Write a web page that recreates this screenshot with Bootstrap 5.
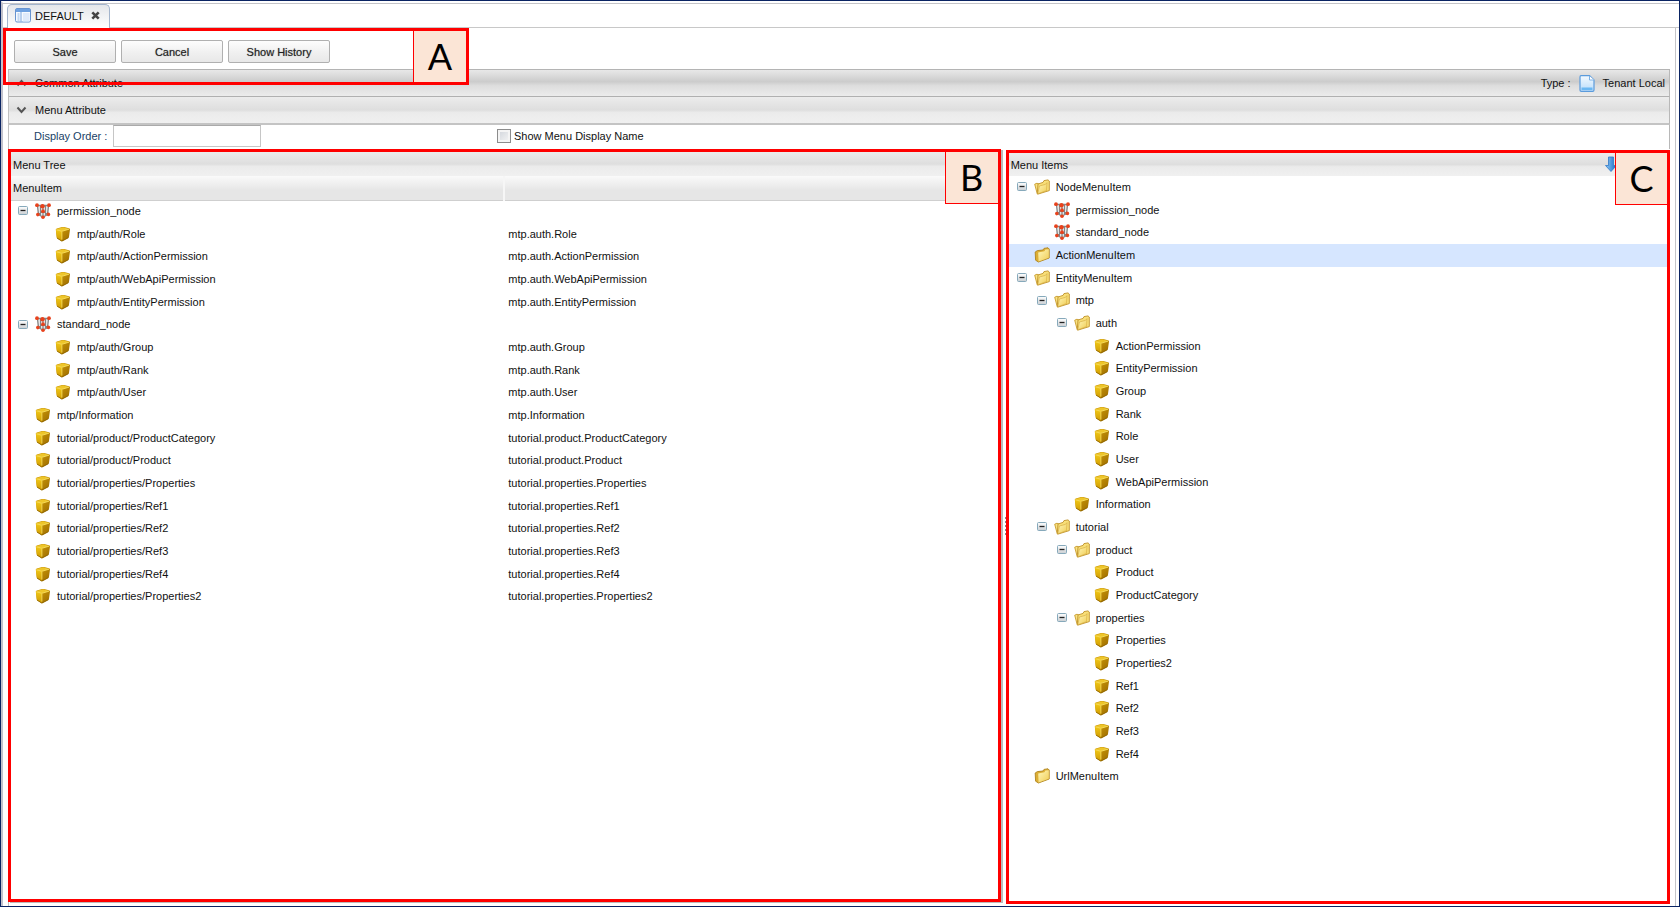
<!DOCTYPE html>
<html lang="en">
<head>
<meta charset="utf-8">
<meta name="viewport" content="width=device-width, initial-scale=1">
<title>DEFAULT - Menu Editor</title>
<link href="https://cdn.jsdelivr.net/npm/bootstrap@5.3.0/dist/css/bootstrap.min.css" rel="stylesheet">
<style>
  body { font-family: "Liberation Sans", Arial, sans-serif; font-size: 11px; line-height: 16px; color: #111; background: #fff; border: 1px solid #0a2463; }
  .frame { border-left: 2px solid #c2c2cc; border-top: 2px solid #fff; min-height: 0; }
  .tabstrip { height: 25px; border-top: 1px solid #c4c4c8; border-bottom: 1px solid #c8c8c8; padding-left: 4px; }
  .doc-tab { height: 24px; width: 103px; border: 1px solid #a3b4cc; border-bottom: 0; border-radius: 5px 5px 0 0; background: linear-gradient(#e4e6ea, #fff); padding: 0 9px 2px 7px; }
  .tab-close { width: 10px; height: 12px; line-height: 0; }
  .page { border-right: 1px solid #c4c4c8; margin-right: 3px; min-height: 0; }
  .toolbar { height: 41px; padding: 12px 0 0 11px; gap: 5px; }
  .tool-btn { width: 102px; height: 23px; padding: 0; font-size: 11px; line-height: 20px; color: #222; border: 1px solid #b0b0b0; border-radius: 2px; background: linear-gradient(#fdfdfd, #f0f0f0 55%, #e8e8e8); text-shadow: 0 0 1px #888; }
  .tool-btn:hover { border-color: #888; }
  .sections { margin: 0 5px; border-left: 1px solid #c0c0c0; border-top: 1px solid #b4b4b4; min-height: 0; }
  .bar { background: linear-gradient(#ececec, #dedede 50%, #ebebeb 60%, #f0f0f0); }
  .section-bar { height: 28px; padding: 0 4px 0 7px; border-bottom: 2px solid #c4c4c4; }
  .section-top { height: 27px; border-bottom-width: 1px; border-color: #b0b0b0; background: linear-gradient(#e8e8e8, #cccccc 45%, #dddddd 60%, #ececec); }
  .edge { border-right: 1px solid #b8b8b8; }
  .fields { height: 24px; padding-left: 25px; }
  .field-label { color: #1a3f66; width: 79px; padding-top: 3px; }
  .order-input { width: 148px; height: 22px; border: 1px solid #c6c6c6; border-top-color: #aaa; }
  .show-name { margin-left: 236px; gap: 3px; padding-bottom: 2px; }
  .show-name input { appearance: none; width: 14px; height: 14px; margin: 0; border: 1px solid #8c8c8c; background: linear-gradient(135deg, #cfd3da, #f6f6f6); box-shadow: inset 0 0 0 2px #f4f4f4; }
  .show-name input:checked { background: #3b6ea5; }
  .panes { padding-bottom: 2px; }
  .pane { border: 3px solid #f00; min-width: 0; }
  .pane-tree { margin: 0 0 2px -1px; box-shadow: 2px 1px 0 #bcbcbc; }
  .pane-items { width: 40%; margin-top: 1px; }
  .splitter { width: 5px; color: #999; }
  .grip { width: 1px; height: 19px; margin-left: 4px; background: repeating-linear-gradient(#888 0 2px, #fff 2px 4px); }
  .pane-head { height: 24px; padding-left: 2px; padding-top: 2px; }
  .pane-items .pane-head { height: 23px; padding-top: 0; }
  .tree-table { table-layout: fixed; font-size: 11px; }
  .tree-table thead th { height: 24px; font-weight: normal; padding: 0 2px; background: linear-gradient(#fafafa, #e6e6e6 60%, #e6e6e6); border-bottom: 1px solid #cfcfcf; }
  .tree-table thead th + th { border-left: 2px solid #f6f6f6; }
  .tree-table td { padding: 0 0 2px 4px; height: 23px; line-height: 16px; }
  .tree-table td:first-child { padding-left: 7px; }
  .tree-table tr:nth-child(3n) td { height: 22px; }
  .tree-list > li { height: 23px; padding: 0 0 2px 8px; }
  .tree-list > li:nth-child(3n) { height: 22px; }
  .tree-list > li.selected { background: #d6e6ff; }
  .node { display: flex; align-items: center; gap: 6px; white-space: nowrap; }
  .toggle { width: 11px; height: 11px; line-height: 0; flex: none; }
  .toggle svg { display: block; }
  .node .ico { width: 16px; height: 16px; flex: none; }
  .lv1 { margin-left: 20px; }
  .lv2 { margin-left: 40px; }
  .lv3 { margin-left: 60px; }
  .callout { font-family: Lato, sans-serif; font-size: 36px; line-height: 50px; color: #000; background: #fbe5d6; width: 53px; text-align: center; border: 1px solid #f00; }
  .mark-a { left: 0; top: 0; width: 466px; height: 57px; border: 3px solid #f00; z-index: 3; pointer-events: none; }
  .mark-a .callout { height: 51px; border-width: 0 0 0 1px; line-height: 51px; }
  .pane-tree .callout { height: 52px; top: 0; right: 0; border-width: 0 0 1px 1px; z-index: 2; }
  .pane-items .callout { height: 53px; top: -1px; right: -1px; z-index: 2; }
  .sort-icon { right: 50px; top: 3px; width: 12px; height: 16px; }
</style>
</head>
<body class="d-flex flex-column vh-100 overflow-hidden">

<svg width="0" height="0" class="position-absolute" aria-hidden="true">
  <defs>
    <linearGradient id="gold" x1="0" y1="0" x2="0" y2="1"><stop offset="0" stop-color="#f0c818"/><stop offset="1" stop-color="#d09a00"/></linearGradient>
    <linearGradient id="bronze" x1="0" y1="0" x2="1" y2="1"><stop offset="0" stop-color="#d6a208"/><stop offset="1" stop-color="#9a6a00"/></linearGradient>
    <linearGradient id="fold" x1="0" y1="0" x2="1" y2="1"><stop offset="0" stop-color="#fff8bc"/><stop offset="1" stop-color="#f0cc54"/></linearGradient>
    <linearGradient id="btnface" x1="0" y1="0" x2="0" y2="1"><stop offset="0" stop-color="#fff"/><stop offset="1" stop-color="#c9ced2"/></linearGradient>
    <linearGradient id="sky" x1="0" y1="0" x2="0" y2="1"><stop offset="0" stop-color="#f4faff"/><stop offset="1" stop-color="#b9dcfa"/></linearGradient>
    <linearGradient id="arrow" x1="0" y1="0" x2="1" y2="0"><stop offset="0" stop-color="#8fcbf7"/><stop offset="1" stop-color="#1668c4"/></linearGradient>
    <symbol id="i-cube" viewBox="0 0 16 16">
      <path d="M.8 3.600Q.8 2.800 1.800 2.500L7 1.100Q8 .9 9 1.100L14 2.300Q15 2.600 15 3.400L14 10.800Q13.900 11.700 13 12.200L8 15Q7 15.500 6 15L2.600 12.800Q1.800 12.300 1.700 11.400Z" fill="url(#bronze)"/>
      <path d="M1.200 3.200 8 1.200 14.700 2.900 7 5.200Z" fill="#edc52a"/>
      <path d="M.9 3.500 6.900 5.300V15.100L2.600 12.600Q1.900 12.100 1.800 11.200Z" fill="url(#gold)"/>
      <path d="M1.400 3.700 6.900 5.300 14 3.200M6.900 5.800V13.500" fill="none" stroke="#fbe468" stroke-width=".8"/>
      <path d="M2 12 6.800 15 13.600 11.600" fill="none" stroke="#8a6200" stroke-width=".7"/>
    </symbol>
    <symbol id="i-net" viewBox="0 0 16 16">
      <path d="M2.500 2.500 3.500 11.500 8 14 12.500 11.500 13.500 2.500M2.500 2.500H13.500M8 4V14M3.500 11 8 8 12.500 11M5.500 3V12M10.500 3V12" fill="none" stroke="#858585" stroke-width="1.400"/>
      <g fill="#e8421c"><circle cx="2" cy="2.200" r="1.900"/><circle cx="7.500" cy="3.300" r="2.200"/><circle cx="14" cy="2.200" r="1.900"/><circle cx="8" cy="8.200" r="1.900"/><circle cx="2.800" cy="11.600" r="1.800"/><circle cx="13.400" cy="11.400" r="1.800"/><circle cx="8" cy="14.200" r="1.800"/></g>
    </symbol>
    <symbol id="i-open" viewBox="0 0 16 16">
      <path d="M.7 5.200 3 4.200 5 5.200V12L3.200 14.600Z" fill="#f8e283" stroke="#c79a2a" stroke-width=".9"/>
      <path d="M4 5 9 3.400 10 1.600 14 .9 15.300 2V11.600L3.600 15.200 3.400 13Z" fill="#f8df78" stroke="#c0922a" stroke-width=".9" stroke-linejoin="round"/>
      <path d="M5.400 7 11.400 5.400 13 3.600 12.600 11.600 3.800 14.800Z" fill="url(#fold)" stroke="#d0a63a" stroke-width=".6"/>
    </symbol>
    <symbol id="i-closed" viewBox="0 0 16 16">
      <path d="M1.200 5 3.400 3.600 9 3 10 1.400 14 .8 15.200 2V11L4.400 15 1.600 13.200Z" fill="#dcae34" stroke="#b0841e" stroke-width=".9" stroke-linejoin="round"/>
      <path d="M4.200 5.600 10.400 4.200 11.400 2.600 14.800 2.200V10.800L4.600 14.400Z" fill="url(#fold)"/>
    </symbol>
    <symbol id="i-minus" viewBox="0 0 11 11">
      <rect x=".5" y="1.500" width="9" height="8" rx="1" fill="url(#btnface)" stroke="#86a9bb"/><path d="M2.500 5.500h5" stroke="#222" stroke-width="1.300"/>
    </symbol>
  </defs>
</svg>

<div class="frame d-flex flex-column flex-grow-1">
  <div class="tabstrip">
    <div class="doc-tab d-flex align-items-center">
      <svg width="16" height="15" viewBox="0 0 16 15" class="me-1"><rect x=".5" y=".5" width="15" height="13.5" rx="1.5" fill="#f6faff" stroke="#6793cf"/><rect x="1" y="1" width="14" height="3" fill="#6fa1e0"/><path d="M2.500 6h2M2.500 8h2M2.500 10h2M2.500 12h2" stroke="#8fb4e3"/><path d="M6 4v9.500" stroke="#7ba4dc"/><path d="M8 5h6.500v8.500H8z" fill="#dfeafa"/></svg>
      <span class="flex-grow-1">DEFAULT</span>
      <button type="button" class="tab-close btn p-0 border-0" aria-label="Close"><svg width="9" height="9" viewBox="0 0 9 9"><path d="M1.300 1.300 7.700 7.700M7.700 1.300 1.300 7.700" stroke="#444" stroke-width="2.600"/></svg></button>
    </div>
  </div>

  <div class="page position-relative d-flex flex-column flex-grow-1">
    <div class="mark-a position-absolute d-flex justify-content-end"><div class="callout">A</div></div>

    <div class="toolbar d-flex flex-shrink-0">
      <button type="button" class="btn tool-btn">Save</button>
      <button type="button" class="btn tool-btn">Cancel</button>
      <button type="button" class="btn tool-btn">Show History</button>
    </div>

    <div class="sections d-flex flex-column flex-grow-1">
      <div class="section-bar section-top edge d-flex align-items-center flex-shrink-0">
        <svg width="11" height="8" viewBox="0 0 11 8"><path d="M1.500 6.500 5.500 2 9.500 6.500" fill="none" stroke="#555" stroke-width="2"/></svg>
        <span class="ms-2 flex-grow-1">Common Attribute</span>
        <span>Type :</span>
        <svg width="16" height="17" viewBox="0 0 16 17" class="mx-2"><path d="M2 .7H10.500L15 5V15Q15 16.300 13.700 16.300H2.300Q1 16.300 1 15V2Q1 .7 2 .7Z" fill="url(#sky)" stroke="#5b9bdc" stroke-width="1.200"/><path d="M10.500 1V5H15" fill="#fff" stroke="#7fb3e6"/><path d="M2.500 12.500H13.500V15H2.500Z" fill="#6cb8f2"/></svg>
        <span>Tenant Local</span>
      </div>
      <div class="section-bar bar edge d-flex align-items-center flex-shrink-0">
        <svg width="11" height="8" viewBox="0 0 11 8"><path d="M1.500 1.500 5.500 6 9.500 1.500" fill="none" stroke="#555" stroke-width="2"/></svg>
        <span class="ms-2">Menu Attribute</span>
      </div>
      <div class="fields edge d-flex flex-shrink-0">
        <label class="field-label" for="displayOrder">Display Order :</label>
        <input type="text" id="displayOrder" class="order-input">
        <div class="show-name d-flex align-items-center">
          <input type="checkbox" id="showName">
          <label for="showName">Show Menu Display Name</label>
        </div>
      </div>

      <div class="panes d-flex flex-grow-1">
        <section class="pane pane-tree position-relative flex-grow-1">
          <div class="callout position-absolute">B</div>
          <div class="pane-head bar d-flex align-items-center">Menu Tree</div>
          <table class="tree-table w-100">
            <thead><tr><th scope="col">MenuItem</th><th scope="col" aria-label="Definition"></th></tr></thead>
            <tbody>
              <tr><td><div class="node"><button type="button" class="toggle btn p-0 border-0" aria-label="Collapse"><svg width="11" height="11"><use href="#i-minus"/></svg></button><svg class="ico"><use href="#i-net"/></svg>permission_node</div></td><td></td></tr>
              <tr><td><div class="node lv1"><span class="toggle"></span><svg class="ico"><use href="#i-cube"/></svg>mtp/auth/Role</div></td><td>mtp.auth.Role</td></tr>
              <tr><td><div class="node lv1"><span class="toggle"></span><svg class="ico"><use href="#i-cube"/></svg>mtp/auth/ActionPermission</div></td><td>mtp.auth.ActionPermission</td></tr>
              <tr><td><div class="node lv1"><span class="toggle"></span><svg class="ico"><use href="#i-cube"/></svg>mtp/auth/WebApiPermission</div></td><td>mtp.auth.WebApiPermission</td></tr>
              <tr><td><div class="node lv1"><span class="toggle"></span><svg class="ico"><use href="#i-cube"/></svg>mtp/auth/EntityPermission</div></td><td>mtp.auth.EntityPermission</td></tr>
              <tr><td><div class="node"><button type="button" class="toggle btn p-0 border-0" aria-label="Collapse"><svg width="11" height="11"><use href="#i-minus"/></svg></button><svg class="ico"><use href="#i-net"/></svg>standard_node</div></td><td></td></tr>
              <tr><td><div class="node lv1"><span class="toggle"></span><svg class="ico"><use href="#i-cube"/></svg>mtp/auth/Group</div></td><td>mtp.auth.Group</td></tr>
              <tr><td><div class="node lv1"><span class="toggle"></span><svg class="ico"><use href="#i-cube"/></svg>mtp/auth/Rank</div></td><td>mtp.auth.Rank</td></tr>
              <tr><td><div class="node lv1"><span class="toggle"></span><svg class="ico"><use href="#i-cube"/></svg>mtp/auth/User</div></td><td>mtp.auth.User</td></tr>
              <tr><td><div class="node"><span class="toggle"></span><svg class="ico"><use href="#i-cube"/></svg>mtp/Information</div></td><td>mtp.Information</td></tr>
              <tr><td><div class="node"><span class="toggle"></span><svg class="ico"><use href="#i-cube"/></svg>tutorial/product/ProductCategory</div></td><td>tutorial.product.ProductCategory</td></tr>
              <tr><td><div class="node"><span class="toggle"></span><svg class="ico"><use href="#i-cube"/></svg>tutorial/product/Product</div></td><td>tutorial.product.Product</td></tr>
              <tr><td><div class="node"><span class="toggle"></span><svg class="ico"><use href="#i-cube"/></svg>tutorial/properties/Properties</div></td><td>tutorial.properties.Properties</td></tr>
              <tr><td><div class="node"><span class="toggle"></span><svg class="ico"><use href="#i-cube"/></svg>tutorial/properties/Ref1</div></td><td>tutorial.properties.Ref1</td></tr>
              <tr><td><div class="node"><span class="toggle"></span><svg class="ico"><use href="#i-cube"/></svg>tutorial/properties/Ref2</div></td><td>tutorial.properties.Ref2</td></tr>
              <tr><td><div class="node"><span class="toggle"></span><svg class="ico"><use href="#i-cube"/></svg>tutorial/properties/Ref3</div></td><td>tutorial.properties.Ref3</td></tr>
              <tr><td><div class="node"><span class="toggle"></span><svg class="ico"><use href="#i-cube"/></svg>tutorial/properties/Ref4</div></td><td>tutorial.properties.Ref4</td></tr>
              <tr><td><div class="node"><span class="toggle"></span><svg class="ico"><use href="#i-cube"/></svg>tutorial/properties/Properties2</div></td><td>tutorial.properties.Properties2</td></tr>
            </tbody>
          </table>
        </section>

        <div class="splitter d-flex align-items-center flex-shrink-0"><div class="grip"></div></div>

        <section class="pane pane-items position-relative flex-shrink-0">
          <div class="callout position-absolute">C</div>
          <svg class="sort-icon position-absolute" viewBox="0 0 12 16"><path d="M3.500 1H8.500V9.500H11.500L6 15.500.5 9.500H3.500Z" fill="url(#arrow)" stroke="#2f78c8" stroke-width=".8"/></svg>
          <div class="pane-head bar d-flex align-items-center">Menu Items</div>
          <ul class="tree-list list-unstyled mb-0">
            <li class="d-flex"><div class="node"><button type="button" class="toggle btn p-0 border-0" aria-label="Collapse"><svg width="11" height="11"><use href="#i-minus"/></svg></button><svg class="ico"><use href="#i-open"/></svg>NodeMenuItem</div></li>
            <li class="d-flex"><div class="node lv1"><span class="toggle"></span><svg class="ico"><use href="#i-net"/></svg>permission_node</div></li>
            <li class="d-flex"><div class="node lv1"><span class="toggle"></span><svg class="ico"><use href="#i-net"/></svg>standard_node</div></li>
            <li class="d-flex selected"><div class="node"><span class="toggle"></span><svg class="ico"><use href="#i-closed"/></svg>ActionMenuItem</div></li>
            <li class="d-flex"><div class="node"><button type="button" class="toggle btn p-0 border-0" aria-label="Collapse"><svg width="11" height="11"><use href="#i-minus"/></svg></button><svg class="ico"><use href="#i-open"/></svg>EntityMenuItem</div></li>
            <li class="d-flex"><div class="node lv1"><button type="button" class="toggle btn p-0 border-0" aria-label="Collapse"><svg width="11" height="11"><use href="#i-minus"/></svg></button><svg class="ico"><use href="#i-open"/></svg>mtp</div></li>
            <li class="d-flex"><div class="node lv2"><button type="button" class="toggle btn p-0 border-0" aria-label="Collapse"><svg width="11" height="11"><use href="#i-minus"/></svg></button><svg class="ico"><use href="#i-open"/></svg>auth</div></li>
            <li class="d-flex"><div class="node lv3"><span class="toggle"></span><svg class="ico"><use href="#i-cube"/></svg>ActionPermission</div></li>
            <li class="d-flex"><div class="node lv3"><span class="toggle"></span><svg class="ico"><use href="#i-cube"/></svg>EntityPermission</div></li>
            <li class="d-flex"><div class="node lv3"><span class="toggle"></span><svg class="ico"><use href="#i-cube"/></svg>Group</div></li>
            <li class="d-flex"><div class="node lv3"><span class="toggle"></span><svg class="ico"><use href="#i-cube"/></svg>Rank</div></li>
            <li class="d-flex"><div class="node lv3"><span class="toggle"></span><svg class="ico"><use href="#i-cube"/></svg>Role</div></li>
            <li class="d-flex"><div class="node lv3"><span class="toggle"></span><svg class="ico"><use href="#i-cube"/></svg>User</div></li>
            <li class="d-flex"><div class="node lv3"><span class="toggle"></span><svg class="ico"><use href="#i-cube"/></svg>WebApiPermission</div></li>
            <li class="d-flex"><div class="node lv2"><span class="toggle"></span><svg class="ico"><use href="#i-cube"/></svg>Information</div></li>
            <li class="d-flex"><div class="node lv1"><button type="button" class="toggle btn p-0 border-0" aria-label="Collapse"><svg width="11" height="11"><use href="#i-minus"/></svg></button><svg class="ico"><use href="#i-open"/></svg>tutorial</div></li>
            <li class="d-flex"><div class="node lv2"><button type="button" class="toggle btn p-0 border-0" aria-label="Collapse"><svg width="11" height="11"><use href="#i-minus"/></svg></button><svg class="ico"><use href="#i-open"/></svg>product</div></li>
            <li class="d-flex"><div class="node lv3"><span class="toggle"></span><svg class="ico"><use href="#i-cube"/></svg>Product</div></li>
            <li class="d-flex"><div class="node lv3"><span class="toggle"></span><svg class="ico"><use href="#i-cube"/></svg>ProductCategory</div></li>
            <li class="d-flex"><div class="node lv2"><button type="button" class="toggle btn p-0 border-0" aria-label="Collapse"><svg width="11" height="11"><use href="#i-minus"/></svg></button><svg class="ico"><use href="#i-open"/></svg>properties</div></li>
            <li class="d-flex"><div class="node lv3"><span class="toggle"></span><svg class="ico"><use href="#i-cube"/></svg>Properties</div></li>
            <li class="d-flex"><div class="node lv3"><span class="toggle"></span><svg class="ico"><use href="#i-cube"/></svg>Properties2</div></li>
            <li class="d-flex"><div class="node lv3"><span class="toggle"></span><svg class="ico"><use href="#i-cube"/></svg>Ref1</div></li>
            <li class="d-flex"><div class="node lv3"><span class="toggle"></span><svg class="ico"><use href="#i-cube"/></svg>Ref2</div></li>
            <li class="d-flex"><div class="node lv3"><span class="toggle"></span><svg class="ico"><use href="#i-cube"/></svg>Ref3</div></li>
            <li class="d-flex"><div class="node lv3"><span class="toggle"></span><svg class="ico"><use href="#i-cube"/></svg>Ref4</div></li>
            <li class="d-flex"><div class="node"><span class="toggle"></span><svg class="ico"><use href="#i-closed"/></svg>UrlMenuItem</div></li>
          </ul>
        </section>
      </div>
    </div>
  </div>
</div>
<script src="https://cdn.jsdelivr.net/npm/bootstrap@5.3.0/dist/js/bootstrap.bundle.min.js"></script>
</body>
</html>
